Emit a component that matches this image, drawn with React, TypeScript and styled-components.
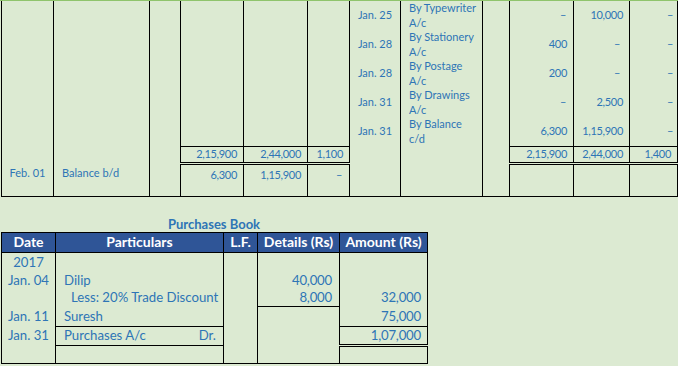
import React from 'react';
import styled, { createGlobalStyle } from 'styled-components';

type Rule = 'none' | 'single' | 'double';
type Align = 'left' | 'center' | 'right';

const ruleCss = (r?: Rule) =>
  r === 'single' ? '1px solid #000' : r === 'double' ? '3px double #000' : 'none';

const GlobalStyle = createGlobalStyle`
  html, body {
    margin: 0;
    padding: 0;
  }
  body {
    width: 678px;
    height: 366px;
    overflow: hidden;
    background: #dcead2;
    font-family: Lato, "Liberation Sans", sans-serif;
  }
`;

const Page = styled.div`
  display: flex;
  flex-direction: column;
  align-items: flex-start;
  border-top: 1px solid #8fc46c;
`;

const Table = styled.table<{ $size: number }>`
  border-collapse: collapse;
  table-layout: fixed;
  margin-left: 1px;
  font-size: ${(p) => p.$size}px;
  color: #2e75b6;
  border-bottom: 1px solid #000;
`;

const Col = styled.col<{ $w: number }>`
  width: ${(p) => p.$w}px;
`;

const Row = styled.tr<{ $h: number }>`
  height: ${(p) => p.$h}px;
`;

const Cell = styled.td<{ $align?: Align; $top?: Rule; $bottom?: Rule; $indent?: number; $valign?: string }>`
  border-left: 1px solid #000;
  border-right: 1px solid #000;
  border-top: ${(p) => ruleCss(p.$top)};
  border-bottom: ${(p) => ruleCss(p.$bottom)};
  padding: 0;
  padding-top: ${(p) => (p.$valign === 'top' ? 3 : 0)}px;
  padding-left: ${(p) => (p.$align === 'left' ? p.$indent ?? 8 : 0)}px;
  padding-right: ${(p) => (p.$align === 'right' ? p.$indent ?? 6 : 0)}px;
  text-align: ${(p) => p.$align ?? 'center'};
  vertical-align: ${(p) => p.$valign ?? 'middle'};
  white-space: nowrap;
  line-height: 14.5px;
`;

// figures: Calibri digits are narrower than Lato's, so tighten them a little
const Amount = styled(Cell)<{ $tight?: number }>`
  letter-spacing: ${(p) => p.$tight ?? -0.3}px;
`;

const Split = styled.div`
  display: flex;
  justify-content: space-between;
  padding-right: 7px;
`;

const Section = styled.section`
  width: 428px;
  display: flex;
  flex-direction: column;
  align-items: center;
  margin-top: 19px;
`;

const Title = styled.h2`
  margin: 0;
  font-size: 13px;
  line-height: 16px;
  font-weight: 700;
  color: #2e75b6;
`;

const Head = styled.th`
  background: #2f5597;
  color: #fff;
  font-weight: 700;
  font-size: 14px;
  line-height: 16px;
  border: 1px solid #000;
  padding: 0;
  height: 19px;
  white-space: nowrap;
`;

const D = '–';

type Entry = { date: string; lines: string[]; a: string; b: string; c: string };

const credits: Entry[] = [
  { date: 'Jan. 25', lines: ['By Typewriter', 'A/c'], a: D, b: '10,000', c: D },
  { date: 'Jan. 28', lines: ['By Stationery', 'A/c'], a: '400', b: D, c: D },
  { date: 'Jan. 28', lines: ['By Postage', 'A/c'], a: '200', b: D, c: D },
  { date: 'Jan. 31', lines: ['By Drawings', 'A/c'], a: D, b: '2,500', c: D },
  { date: 'Jan. 31', lines: ['By Balance', 'c/d'], a: '6,300', b: '1,15,900', c: D },
];

const heights = [29, 28, 29, 29, 28];

const dashPad = (v: string, pad: number) => (v === D ? pad : 6);

export default function App() {
  return (
    <>
      <GlobalStyle />
      <Page>
        <Table $size={11}>
          <colgroup>
            {[52, 96, 31, 63, 64, 42, 51, 82, 27, 64, 56, 48].map((w, i) => (
              <Col key={i} $w={w} />
            ))}
          </colgroup>
          <tbody>
            {credits.map((e, i) => (
              <Row key={i} $h={heights[i]}>
                <Cell />
                <Cell />
                <Cell />
                <Cell />
                <Cell />
                <Cell />
                <Cell>{e.date}</Cell>
                <Cell $align="left">
                  {e.lines[0]}
                  <br />
                  {e.lines[1]}
                </Cell>
                <Cell />
                <Amount $align="right" $indent={dashPad(e.a, 7)}>{e.a}</Amount>
                <Amount $align="right" $indent={dashPad(e.b, 9)}>{e.b}</Amount>
                <Amount $align="right" $indent={dashPad(e.c, 4)}>{e.c}</Amount>
              </Row>
            ))}
            <Row $h={17}>
              <Cell />
              <Cell />
              <Cell />
              <Amount $align="right" $top="single" $bottom="double">2,15,900</Amount>
              <Amount $align="right" $top="single" $bottom="double">2,44,000</Amount>
              <Amount $align="right" $top="single" $bottom="double">1,100</Amount>
              <Cell />
              <Cell />
              <Cell />
              <Amount $align="right" $top="single" $bottom="double">2,15,900</Amount>
              <Amount $align="right" $top="single" $bottom="double">2,44,000</Amount>
              <Amount $align="right" $top="single" $bottom="double">1,400</Amount>
            </Row>
            <Row $h={33}>
              <Cell $valign="top">Feb. 01</Cell>
              <Cell $align="left" $valign="top">Balance b/d</Cell>
              <Cell />
              <Amount $align="right" $valign="top">6,300</Amount>
              <Amount $align="right" $valign="top">1,15,900</Amount>
              <Amount $align="right" $valign="top" $indent={7}>{D}</Amount>
              <Cell />
              <Cell />
              <Cell />
              <Cell />
              <Cell />
              <Cell />
            </Row>
          </tbody>
        </Table>

        <Section>
          <Title>Purchases Book</Title>
          <Table $size={13.2}>
            <colgroup>
              {[54, 168, 34, 82, 88].map((w, i) => (
                <Col key={i} $w={w} />
              ))}
            </colgroup>
            <thead>
              <tr>
                <Head>Date</Head>
                <Head>Particulars</Head>
                <Head>L.F.</Head>
                <Head>Details (Rs)</Head>
                <Head>Amount (Rs)</Head>
              </tr>
            </thead>
            <tbody>
              <Row $h={19}>
                <Cell>2017</Cell>
                <Cell />
                <Cell />
                <Cell />
                <Cell />
              </Row>
              <Row $h={18}>
                <Cell>Jan. 04</Cell>
                <Cell $align="left">Dilip</Cell>
                <Cell />
                <Amount $align="right" $indent={7} $tight={-0.2}>40,000</Amount>
                <Cell />
              </Row>
              <Row $h={17}>
                <Cell />
                <Cell $align="left" $indent={15}>Less: 20% Trade Discount</Cell>
                <Cell />
                <Amount $align="right" $indent={7} $tight={-0.2} $bottom="single">8,000</Amount>
                <Amount $align="right" $tight={-0.2}>32,000</Amount>
              </Row>
              <Row $h={20}>
                <Cell>Jan. 11</Cell>
                <Cell $align="left">Suresh</Cell>
                <Cell />
                <Cell />
                <Amount $align="right" $tight={-0.2}>75,000</Amount>
              </Row>
              <Row $h={19}>
                <Cell>Jan. 31</Cell>
                <Cell $align="left" $top="single" $bottom="single">
                  <Split>
                    <span>Purchases A/c</span>
                    <span>Dr.</span>
                  </Split>
                </Cell>
                <Cell />
                <Cell />
                <Amount $align="right" $tight={-0.2} $top="single" $bottom="double">1,07,000</Amount>
              </Row>
              <Row $h={18}>
                <Cell />
                <Cell />
                <Cell />
                <Cell />
                <Cell />
              </Row>
            </tbody>
          </Table>
        </Section>
      </Page>
    </>
  );
}
